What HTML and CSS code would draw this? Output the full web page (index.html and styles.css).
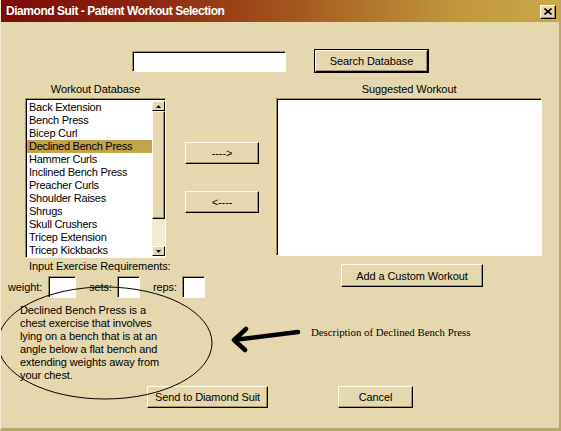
FILE: index.html
```html
<!DOCTYPE html>
<html lang="en">
<head>
    <meta charset="UTF-8">
    <title>Diamond Suit - Patient Workout Selection</title>
    <link rel="stylesheet" href="styles.css">
</head>
<body>
    <div class="window">
        <div class="titlebar">
            <span class="title">Diamond Suit - Patient Workout Selection</span>
            <button class="close" type="button">
                <svg width="8" height="7" viewBox="0 0 8 7">
                    <path d="M0.5 0.5 L7.5 6.5 M7.5 0.5 L0.5 6.5" stroke="#000" stroke-width="1.6"/>
                </svg>
            </button>
        </div>

        <div class="client">
            <div class="search-row">
                <input type="text" class="field search-field">
                <button class="btn btn-default search-btn" type="button">Search Database</button>
            </div>

            <div class="lists-row">
                <div class="col-db">
                    <div class="caption">Workout Database</div>
                    <div class="listbox db-list">
                        <ul class="items">
                            <li>Back Extension</li>
                            <li>Bench Press</li>
                            <li>Bicep Curl</li>
                            <li class="selected">Declined Bench Press</li>
                            <li>Hammer Curls</li>
                            <li>Inclined Bench Press</li>
                            <li>Preacher Curls</li>
                            <li>Shoulder Raises</li>
                            <li>Shrugs</li>
                            <li>Skull Crushers</li>
                            <li>Tricep Extension</li>
                            <li>Tricep Kickbacks</li>
                        </ul>
                        <div class="scrollbar">
                            <div class="sb-btn">
                                <svg width="5" height="3" viewBox="0 0 5 3"><path d="M2.5 0 L5 3 L0 3 Z" fill="#000"/></svg>
                            </div>
                            <div class="sb-thumb"></div>
                            <div class="sb-track"></div>
                            <div class="sb-btn">
                                <svg width="5" height="3" viewBox="0 0 5 3"><path d="M0 0 L5 0 L2.5 3 Z" fill="#000"/></svg>
                            </div>
                        </div>
                    </div>
                </div>

                <div class="col-move">
                    <button class="btn move-btn" type="button">----&gt;</button>
                    <button class="btn move-btn" type="button">&lt;----</button>
                </div>

                <div class="col-suggest">
                    <div class="caption">Suggested Workout</div>
                    <div class="listbox suggest-list"></div>
                </div>
            </div>

            <div class="req-row">
                <div class="req">
                    <div class="req-title">Input Exercise Requirements:</div>
                    <div class="req-fields">
                        <label for="weight">weight:</label>
                        <input type="text" id="weight" class="field w-field">
                        <label for="sets" class="gap">sets:</label>
                        <input type="text" id="sets" class="field s-field">
                        <label for="reps" class="gap">reps:</label>
                        <input type="text" id="reps" class="field s-field">
                    </div>
                </div>
                <button class="btn custom-btn" type="button">Add a Custom Workout</button>
            </div>

            <div class="desc-row">
                <p class="desc">Declined Bench Press is a<br>chest exercise that involves<br>lying on a bench that is at an<br>angle below a flat bench and<br>extending weights away from<br>your chest.</p>
                <svg class="pointer" width="72" height="30" viewBox="0 0 72 30">
                    <path d="M67 7 L3 15 M15 4 L3 15 L14 25" fill="none" stroke="#000" stroke-width="4.5" stroke-linecap="round" stroke-linejoin="round"/>
                </svg>
                <span class="note">Description of Declined Bench Press</span>
            </div>

            <div class="action-row">
                <button class="btn send-btn" type="button">Send to Diamond Suit</button>
                <button class="btn cancel-btn" type="button">Cancel</button>
            </div>

            <!-- hand-drawn ring round the description -->
            <svg class="ring" width="220" height="118" viewBox="0 0 220 118">
                <ellipse cx="107" cy="58" rx="107" ry="56" fill="none" stroke="#000" stroke-width="1"/>
            </svg>
        </div>
    </div>
</body>
</html>
```

FILE: styles.css
```css
body {
    margin: 0;
    font-family: "Liberation Sans", Arial, sans-serif;
    font-size: 11px;
    letter-spacing: -0.1px;
    color: #000;
}
.window {
    width: 561px;
    height: 431px;
    box-sizing: border-box;
    background-color: #e5d8ae;
    border-left: 1px solid #f4edd2;
    border-right: 2px solid #b8a66c;
    border-bottom: 3px solid #b8a66c;
    display: flex;
    flex-direction: column;
    overflow: hidden;
}
.titlebar {
    height: 22px;
    flex: none;
    display: flex;
    align-items: center;
    justify-content: space-between;
    padding: 0 3px 0 5px;
    background: linear-gradient(to right, #7c0a06 0%, #8a240e 25%, #a4561c 52%, #bf953c 80%, #c9a948 100%);
}
.title {
    color: #fff;
    font-weight: bold;
    font-size: 12px;
    letter-spacing: -0.45px;
}
.close {
    width: 16px;
    height: 14px;
    padding: 0;
    margin-top: 1px;
    display: flex;
    align-items: center;
    justify-content: center;
    background-color: #e5d8ae;
    border: 1px solid;
    border-color: #fffbea #000 #000 #fffbea;
    box-shadow: inset -1px -1px 0 #9c8c5c;
}
.client {
    position: relative;
    flex: 1;
}

/* shared controls */
.btn {
    font-family: inherit;
    font-size: 11px;
    letter-spacing: -0.1px;
    color: #000;
    padding: 0;
    background-color: #e5d8ae;
    border: 1px solid;
    border-color: #fffbea #000 #000 #fffbea;
    box-shadow: inset -1px -1px 0 #a3935f;
}
.btn-default {
    outline: 1px solid #000;
}
.field {
    box-sizing: border-box;
    background-color: #fff;
    border: 1px solid;
    border-color: #9a8b5e #fffbea #fffbea #9a8b5e;
    box-shadow: inset 1px 1px 0 #000;
    padding: 0;
    margin: 0;
}
.caption {
    text-align: center;
    height: 15px;
    line-height: 13px;
}
.listbox {
    box-sizing: border-box;
    background-color: #fff;
    border: 1px solid;
    border-color: #9a8b5e #fffbea #fffbea #9a8b5e;
    box-shadow: inset 1px 1px 0 #000;
}

/* search */
.search-row {
    display: flex;
    align-items: flex-start;
    margin-top: 28px;
}
.search-field {
    width: 154px;
    height: 21px;
    margin: 1px 0 0 131px;
}
.search-btn {
    width: 113px;
    height: 22px;
    margin-left: 29px;
}

/* lists */
.lists-row {
    display: flex;
    margin-top: 11px;
}
.col-db {
    width: 141px;
    margin-left: 24px;
}
.db-list {
    height: 160px;
    display: flex;
    padding: 2px 0 0 1px;
    overflow: hidden;
}
.items {
    list-style: none;
    margin: 0;
    padding: 0;
    flex: 1;
    letter-spacing: -0.25px;
    overflow: hidden;
    height: 156px;
}
.items li {
    height: 13px;
    line-height: 13px;
    padding-left: 2px;
    white-space: nowrap;
}
.items li.selected {
    background-color: #c4a44a;
}
.scrollbar {
    width: 13px;
    display: flex;
    flex-direction: column;
    height: 155px;
}
.sb-btn {
    height: 10px;
    box-sizing: border-box;
    display: flex;
    align-items: center;
    justify-content: center;
    background-color: #e5d8ae;
    border: 1px solid;
    border-color: #fffbea #000 #000 #fffbea;
}
.sb-thumb {
    height: 108px;
    box-sizing: border-box;
    background-color: #e5d8ae;
    border: 1px solid;
    border-color: #fffbea #000 #000 #fffbea;
    box-shadow: inset -1px -1px 0 #a3935f;
}
.sb-track {
    flex: 1;
    background-color: #f1ebd4;
}
.col-move {
    width: 74px;
    margin-left: 19px;
    display: flex;
    flex-direction: column;
    padding-top: 59px;
    gap: 27px;
}
.move-btn {
    height: 22px;
}
.col-suggest {
    width: 266px;
    margin-left: 17px;
}
.suggest-list {
    height: 158px;
}

/* exercise requirements */
.req-row {
    display: flex;
    align-items: flex-start;
}
.req {
    width: 204px;
}
.req-title {
    margin: 2px 0 0 28px;
    line-height: 13px;
}
.req-fields {
    display: flex;
    align-items: center;
    margin: 3px 0 0 7px;
}
.req-fields .gap {
    margin-left: 13px;
}
.w-field {
    width: 28px;
    height: 22px;
    margin-left: 6px;
}
.s-field {
    width: 23px;
    height: 22px;
    margin-left: 5px;
}
.custom-btn {
    width: 142px;
    height: 23px;
    margin: 6px 0 0 136px;
}

/* description */
.desc-row {
    display: flex;
    align-items: flex-start;
    height: 88px;
}
.desc {
    margin: 6px 0 0 19px;
    line-height: 13px;
    width: 192px;
}
.pointer {
    margin: 27px 0 0 19px;
}
.note {
    font-family: "Liberation Serif", "Times New Roman", serif;
    font-size: 10.8px;
    letter-spacing: 0;
    margin: 28px 0 0 8px;
}

.action-row {
    display: flex;
}
.send-btn {
    width: 121px;
    height: 22px;
    margin-left: 146px;
}
.cancel-btn {
    width: 75px;
    height: 22px;
    margin-left: 70px;
}

.ring {
    position: absolute;
    left: -3px;
    top: 263px;
    pointer-events: none;
}
```
